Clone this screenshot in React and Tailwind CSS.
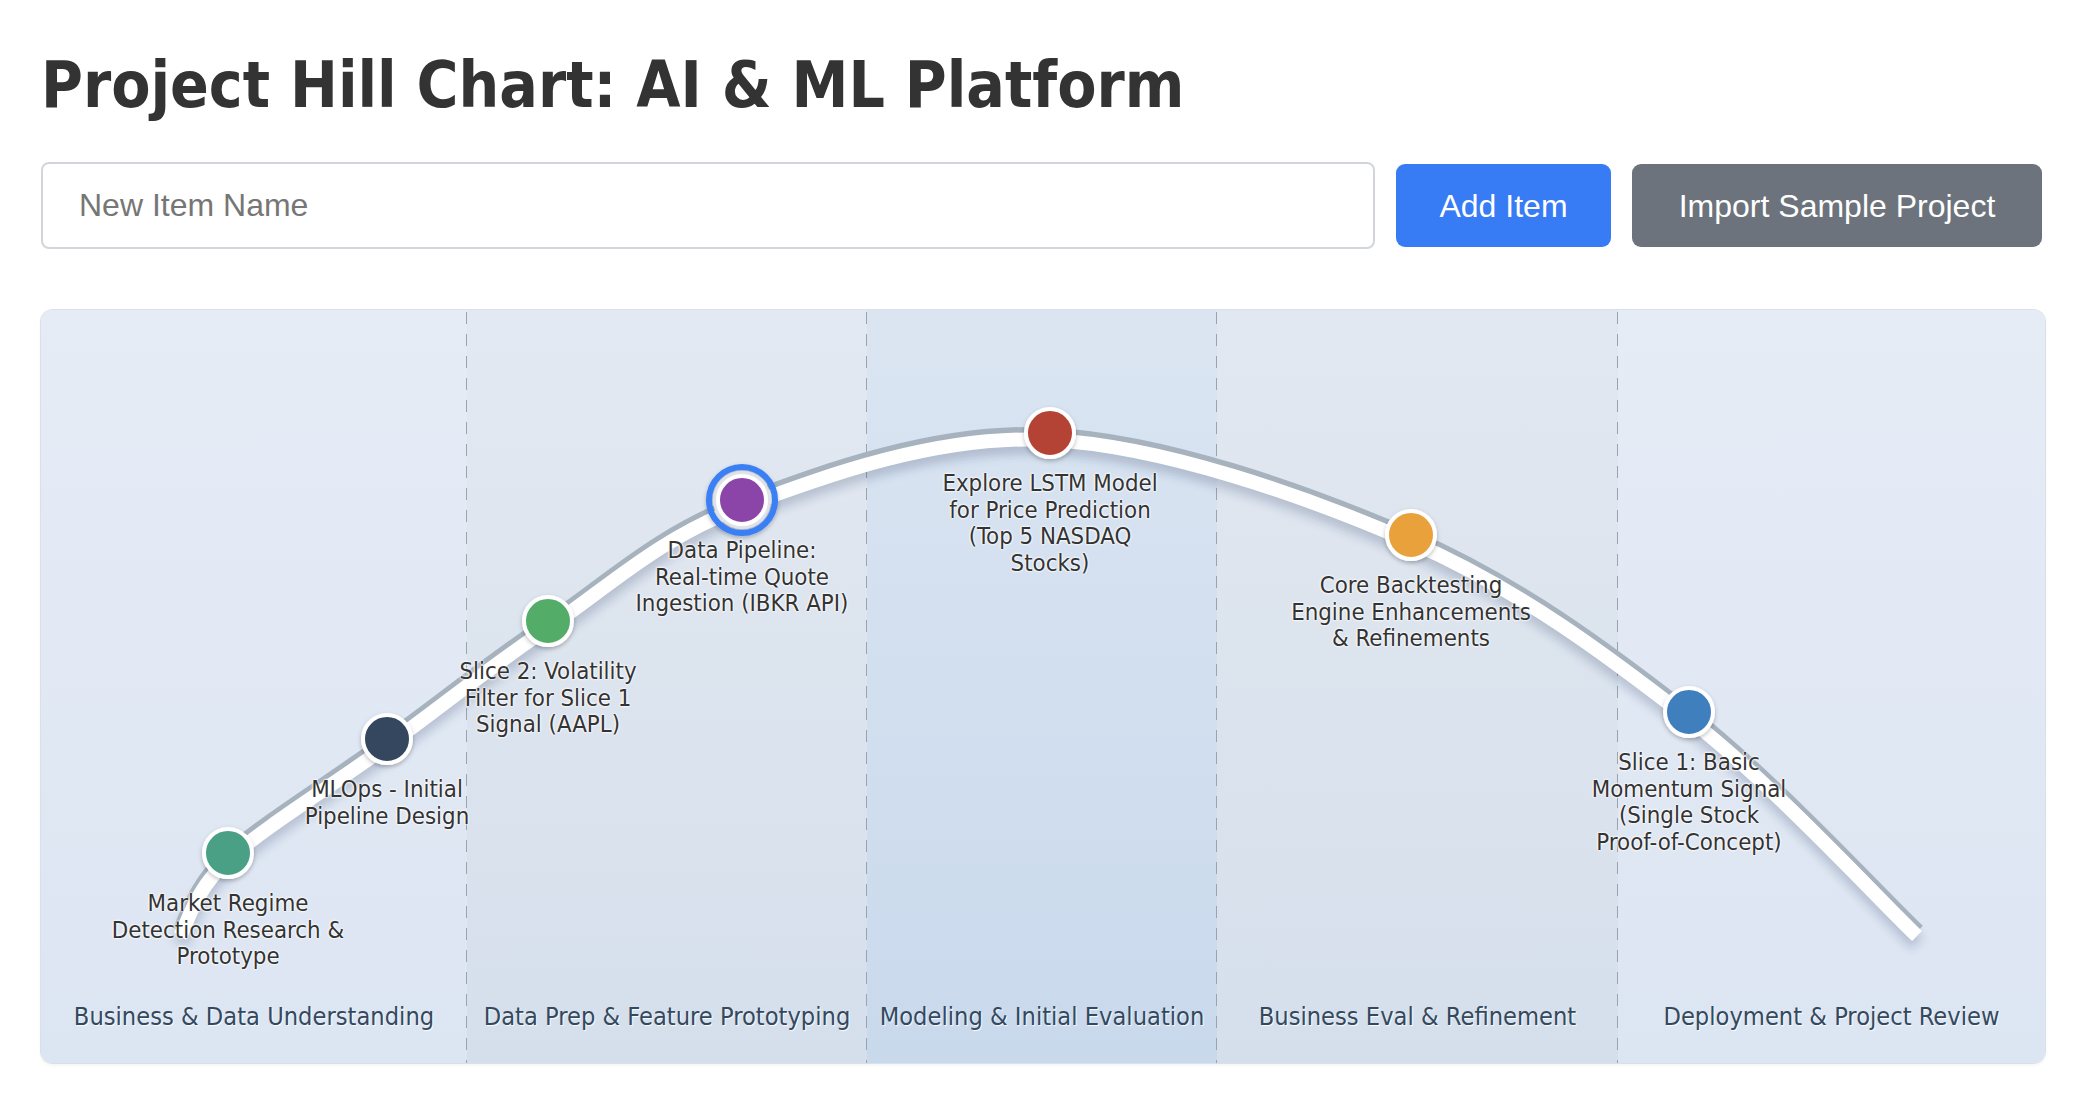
import React from "react";

const OX = 41;
const OY = 310;

const dots = [
  { x: 228, y: 853, c: "#48a085", lines: ["Market Regime", "Detection Research &", "Prototype"] },
  { x: 387, y: 739, c: "#34475f", lines: ["MLOps - Initial", "Pipeline Design"] },
  { x: 548, y: 621, c: "#53ad69", lines: ["Slice 2: Volatility", "Filter for Slice 1", "Signal (AAPL)"] },
  { x: 742, y: 500, c: "#8b45a9", lines: ["Data Pipeline:", "Real-time Quote", "Ingestion (IBKR API)"], selected: true },
  { x: 1050, y: 433, c: "#b44334", lines: ["Explore LSTM Model", "for Price Prediction", "(Top 5 NASDAQ", "Stocks)"] },
  { x: 1411, y: 535, c: "#e9a13b", lines: ["Core Backtesting", "Engine Enhancements", "& Refinements"] },
  { x: 1689, y: 712, c: "#417fbd", lines: ["Slice 1: Basic", "Momentum Signal", "(Single Stock", "Proof-of-Concept)"] },
];

const curvePts = [
  [180, 929],
  [228, 853],
  [387, 739],
  [548, 621],
  [742, 500],
  [1050, 433],
  [1411, 535],
  [1689, 712],
  [1917, 929],
].map(([x, y]) => [x - OX, y - OY]);

function catmull(pts) {
  let d = `M${pts[0][0]},${pts[0][1]}`;
  for (let i = 0; i < pts.length - 1; i++) {
    const p0 = pts[i - 1] || pts[i];
    const p1 = pts[i];
    const p2 = pts[i + 1];
    const p3 = pts[i + 2] || p2;
    const c1x = p1[0] + (p2[0] - p0[0]) / 6;
    const c1y = p1[1] + (p2[1] - p0[1]) / 6;
    const c2x = p2[0] - (p3[0] - p1[0]) / 6;
    const c2y = p2[1] - (p3[1] - p1[1]) / 6;
    d += ` C${c1x.toFixed(1)},${c1y.toFixed(1)} ${c2x.toFixed(1)},${c2y.toFixed(1)} ${p2[0]},${p2[1]}`;
  }
  return d;
}

const pathD = catmull(curvePts);

const phases = [
  { w: "w-[426px]", bg: "bg-[linear-gradient(to_bottom,#e6ecf6,#dce5f2)]", label: "Business & Data Understanding", line: true },
  { w: "w-[400px]", bg: "bg-[linear-gradient(to_bottom,#e3e9f2,#d5dfeb)]", label: "Data Prep & Feature Prototyping", line: true },
  { w: "w-[350px]", bg: "bg-[linear-gradient(to_bottom,#dbe5f2,#c9d9ec)]", label: "Modeling & Initial Evaluation", line: true },
  { w: "w-[401px]", bg: "bg-[linear-gradient(to_bottom,#e2e8f1,#d5dfeb)]", label: "Business Eval & Refinement", line: true },
  { w: "flex-1", bg: "bg-[linear-gradient(to_bottom,#e6ecf6,#dce5f2)]", label: "Deployment & Project Review", line: false },
];

const chartFont =
  "font-['DejaVu_Sans_Condensed','DejaVu_Sans',sans-serif] [font-stretch:condensed]";

export default function App() {
  return (
    <div className="min-h-screen bg-white px-[41px] pt-[53px]">
      <h1 className={`text-[63.6px] leading-[64px] font-bold text-[#333333] ${chartFont}`}>
        Project Hill Chart: AI &amp; ML Platform
      </h1>

      <div className="mt-[45px] flex items-center gap-[21px] pr-[3px] font-['Liberation_Sans',Arial,sans-serif]">
        <input
          type="text"
          placeholder="New Item Name"
          className="h-[87px] flex-1 rounded-[8px] border-2 border-[#d2d6db] bg-white px-[36px] text-[32px] text-[#333] outline-none placeholder:text-[#767676]"
        />
        <button className="h-[83px] w-[215px] rounded-[9px] bg-[#377bf5] text-[32px] text-white">
          Add Item
        </button>
        <button className="h-[83px] w-[410px] rounded-[9px] bg-[#6c737c] text-[32px] text-white">
          Import Sample Project
        </button>
      </div>

      <div
        className={`relative mt-[61px] flex h-[753px] overflow-hidden rounded-[12px] shadow-[0_0_0_1px_#d9e0ea,0_2px_4px_rgba(0,0,0,0.06)] ${chartFont}`}
      >
        {phases.map((p) => (
          <div
            key={p.label}
            className={`relative flex flex-col items-center justify-end pb-[30px] ${p.w} ${p.bg}`}
          >
            <span className="text-[25.2px] leading-[32px] whitespace-nowrap text-[#34495e] [text-shadow:1px_1px_1px_rgba(255,255,255,0.9)]">
              {p.label}
            </span>
            {p.line && (
              <div className="absolute right-[-1px] top-[2px] bottom-0 w-[2px] bg-[repeating-linear-gradient(to_bottom,#9ba3ae_0px,#9ba3ae_12px,transparent_12px,transparent_22px)]" />
            )}
          </div>
        ))}

        <svg className="absolute inset-0" width="2002" height="753" viewBox="0 0 2002 753">
          <defs>
            <filter id="blur" x="-10%" y="-10%" width="120%" height="130%">
              <feGaussianBlur stdDeviation="5" />
            </filter>
            <filter id="dotshadow" x="-50%" y="-50%" width="200%" height="200%">
              <feDropShadow dx="0" dy="2" stdDeviation="2" floodColor="#000" floodOpacity="0.25" />
            </filter>
          </defs>
          <path d={pathD} transform="translate(0,14)" fill="none" stroke="rgba(40,60,90,0.22)" strokeWidth="16" filter="url(#blur)" />
          <path d={pathD} transform="translate(0,3)" fill="none" stroke="#a6b2be" strokeWidth="17" />
          <path d={pathD} transform="translate(0,7)" fill="none" stroke="#ffffff" strokeWidth="14" />
          {dots.map((d) => (
            <g key={d.lines[0]} filter="url(#dotshadow)">
              {d.selected && (
                <>
                  <circle cx={d.x - OX} cy={d.y - OY} r="29" fill="#dfe3e8" />
                  <circle cx={d.x - OX} cy={d.y - OY} r="33" fill="none" stroke="#3a7ff5" strokeWidth="6" />
                </>
              )}
              <circle cx={d.x - OX} cy={d.y - OY} r="24" fill={d.c} stroke="#ffffff" strokeWidth="4" />
            </g>
          ))}
        </svg>

        {dots.map((d) => (
          <div
            key={"l" + d.lines[0]}
            className="absolute w-[320px] text-center text-[23.8px] leading-[26.6px] text-[#333333] [text-shadow:0_0_2px_#fff,0_0_2px_#fff,0_0_3px_#fff]"
            style={{ left: d.x - OX - 160, top: d.y - OY + 37 }}
          >
            {d.lines.map((l) => (
              <div key={l} className="whitespace-nowrap">
                {l}
              </div>
            ))}
          </div>
        ))}
      </div>
    </div>
  );
}
